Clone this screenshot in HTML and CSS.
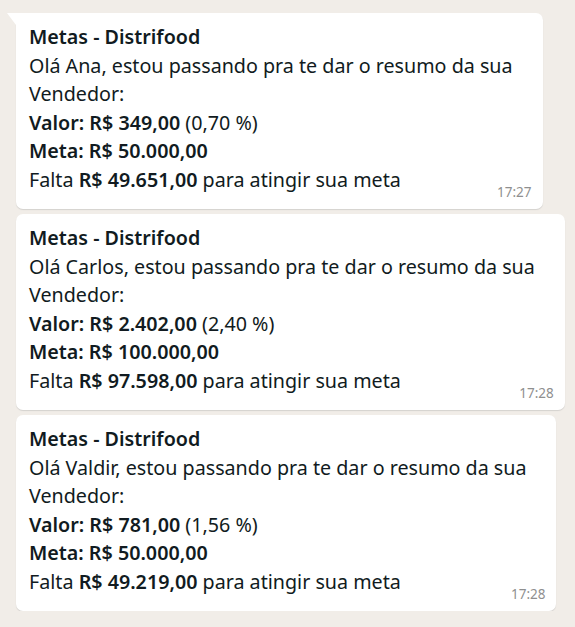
FILE: index.html
```html
<!DOCTYPE html>
<html lang="pt-BR">
<head>
  <meta charset="UTF-8">
  <meta name="viewport" content="width=device-width, initial-scale=1.0">
  <title>Metas - Distrifood</title>
  <link rel="stylesheet" href="styles.css">
</head>
<body>
  <div class="chat">
    <div class="bubble tail">
      <div class="msg">
        <strong>Metas - Distrifood</strong><br>
        Olá Ana, estou passando pra te dar o resumo da sua<br>
        Vendedor:<br>
        <strong>Valor: R$ 349,00</strong> (0,70 %)<br>
        <strong>Meta: R$ 50.000,00</strong><br>
        Falta <strong>R$ 49.651,00</strong> para atingir sua meta
      </div>
      <div class="time">17:27</div>
    </div>

    <div class="bubble">
      <div class="msg">
        <strong>Metas - Distrifood</strong><br>
        Olá Carlos, estou passando pra te dar o resumo da sua<br>
        Vendedor:<br>
        <strong>Valor: R$ 2.402,00</strong> (2,40 %)<br>
        <strong>Meta: R$ 100.000,00</strong><br>
        Falta <strong>R$ 97.598,00</strong> para atingir sua meta
      </div>
      <div class="time">17:28</div>
    </div>

    <div class="bubble">
      <div class="msg">
        <strong>Metas - Distrifood</strong><br>
        Olá Valdir, estou passando pra te dar o resumo da sua<br>
        Vendedor:<br>
        <strong>Valor: R$ 781,00</strong> (1,56 %)<br>
        <strong>Meta: R$ 50.000,00</strong><br>
        Falta <strong>R$ 49.219,00</strong> para atingir sua meta
      </div>
      <div class="time">17:28</div>
    </div>
  </div>
</body>
</html>
```

FILE: styles.css
```css
:root {
  --chat-bg: #f1ede8;
  --bubble-bg: #ffffff;
  --text-color: #111b21;
  --time-color: #8f8f8f;
}

body {
  margin: 0;
  background-color: var(--chat-bg);
  font-family: 'Noto Sans', 'Open Sans', sans-serif;
  color: var(--text-color);
}

.chat {
  display: flex;
  flex-direction: column;
  align-items: flex-start;
  gap: 5px;
  padding: 13px 0 0 16px;
}

.bubble {
  position: relative;
  background-color: var(--bubble-bg);
  border-radius: 7px;
  box-shadow: 0 1px 1px rgba(11, 20, 26, 0.12);
  padding: 10px 11px 8px 13px;
}

.bubble.tail {
  border-top-left-radius: 0;
}

/* little tail on the first message */
.bubble.tail::before {
  content: '';
  position: absolute;
  top: 0;
  left: -9px;
  width: 0;
  height: 0;
  border-top: 12px solid var(--bubble-bg);
  border-left: 9px solid transparent;
}

.msg {
  font-size: 19.7px;
  line-height: 28.5px;
  padding-right: 19px;
}

.msg strong {
  font-weight: 600;
}

.time {
  text-align: right;
  font-size: 13.5px;
  line-height: 18px;
  margin-top: -11px;
  color: var(--time-color);
}
```
